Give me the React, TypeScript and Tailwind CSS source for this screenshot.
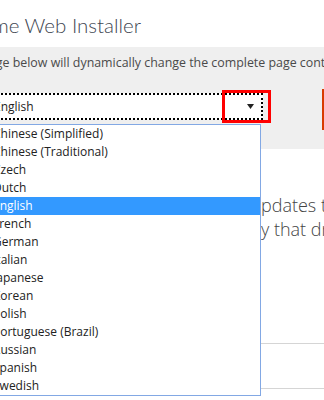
const languages = [
  "Chinese (Simplified)",
  "Chinese (Traditional)",
  "Czech",
  "Dutch",
  "English",
  "French",
  "German",
  "Italian",
  "Japanese",
  "Korean",
  "Polish",
  "Portuguese (Brazil)",
  "Russian",
  "Spanish",
  "Swedish",
];

export default function App() {
  return (
    <div className="relative h-[400px] w-[324px] overflow-hidden bg-white text-[#444] [font-family:'Open_Sans',sans-serif]">
      {/* Title */}
      <h1 className="ml-[-51px] h-[47px] whitespace-nowrap pt-[10px] text-[20.5px] font-light leading-[30px] text-[#3f4752] [font-family:Lato,sans-serif]">
        Chrome Web Installer
      </h1>

      {/* Language band */}
      <div className="h-[102px] bg-[#efefef]">
        <p className="ml-[-108px] whitespace-nowrap pt-[7px] text-[12.4px] leading-[18px] text-[#4a4a4a]">
          Selecting a language below will dynamically change the complete page content to that language.
        </p>
        <div className="mt-[17px] flex items-start">
          <div className="ml-[-20px] mt-[4px] flex h-[27px] w-[283px] shrink-0 items-center justify-between border-2 border-dotted border-black bg-white pl-[12px] pr-[7px] text-[12px] text-[#222]">
            <span>English</span>
            <svg width="7" height="5" viewBox="0 0 7 5">
              <path d="M0 0h7L3.5 5z" fill="#222" />
            </svg>
          </div>
          <div className="ml-[59px] h-[41px] w-[60px] shrink-0 bg-[#d83b01]" />
        </div>
      </div>

      {/* Page body */}
      <div className="mt-[44px] text-[18px] font-light leading-[24px] text-[#444]">
        <div className="flex whitespace-nowrap">
          <span className="w-[261px] shrink-0" />
          <span>pdates to keep you secure</span>
        </div>
        <div className="flex whitespace-nowrap">
          <span className="w-[261px] shrink-0" />
          <span>y that drives</span>
        </div>
      </div>
      <div className="mt-[102px] border-t border-[#d5d5d5]" />
      <div className="mt-[44px] border-t border-[#d5d5d5]" />

      {/* Open dropdown list */}
      <ul className="absolute left-[-10px] top-[124px] w-[271px] border border-[#82a8e4] bg-white text-[12px] text-[#222]">
        {languages.map((lang) => (
          <li
            key={lang}
            className={
              lang === "English"
                ? "h-[18px] whitespace-nowrap bg-[#3399ff] pl-[2px] leading-[18px] text-white"
                : "h-[18px] whitespace-nowrap pl-[2px] leading-[18px]"
            }
          >
            {lang}
          </li>
        ))}
      </ul>

      {/* Highlight box */}
      <div className="absolute left-[222px] top-[90px] h-[33px] w-[49px] border-[3px] border-[#f00]" />
    </div>
  );
}
